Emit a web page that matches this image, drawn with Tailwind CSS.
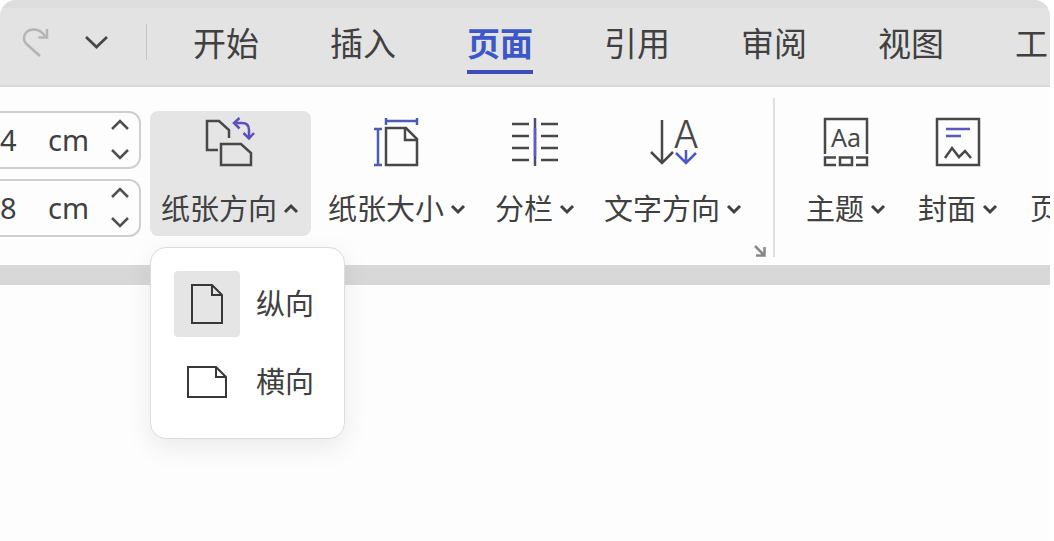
<!DOCTYPE html>
<html lang="zh-CN">

<head>
    <meta charset="UTF-8" />
    <meta name="viewport" content="width=device-width, initial-scale=1.0" />
    <script src="https://cdn.jsdelivr.net/npm/@tailwindcss/browser@4"></script>
    <title>页面</title>
</head>

<body class="bg-white min-h-screen overflow-x-hidden pr-1 font-['Noto_Sans','Noto_Sans_CJK_SC',sans-serif] text-[#404040]">
    <div class="min-h-screen overflow-hidden rounded-t-2xl bg-[#fdfdfd]">

        <!-- Tabs -->
        <header class="flex h-[87px] items-center overflow-hidden border-t-8 border-b-2 border-t-[#dedede] border-b-[#d8d8d8] bg-[#e3e3e3] pb-[6px] whitespace-nowrap">
            <button type="button" aria-label="恢复" class="mb-1 ml-5 shrink-0">
                <svg class="size-8" viewBox="0 0 32 32" fill="none" stroke="#b4b4b4" stroke-width="2.5">
                    <path d="M20 30L6.500 18C1.500 13 4.500 4 13 3.500C19 3.200 23 6.500 25.500 11" />
                    <path d="M27 3V11.500H18.500" />
                </svg>
            </button>
            <button type="button" aria-label="更多" class="mb-1 ml-8 shrink-0">
                <svg class="w-6 h-4" viewBox="0 0 24 16" fill="none" stroke="#484848" stroke-width="2.8">
                    <path d="M2 3L12.500 13L23 3" />
                </svg>
            </button>
            <span class="mb-1 ml-[38px] h-9 w-px shrink-0 bg-[#c4c4c4]"></span>

            <nav class="ml-[46px] flex gap-[71px] text-[33px] leading-[52px]">
                <a href="#" class="border-y-4 border-transparent">开始</a>
                <a href="#" class="border-y-4 border-transparent">插入</a>
                <a href="#" class="border-y-4 border-t-transparent border-b-[#3c4cb8] font-bold text-[#3c58c8]">页面</a>
                <a href="#" class="border-y-4 border-transparent">引用</a>
                <a href="#" class="border-y-4 border-transparent">审阅</a>
                <a href="#" class="border-y-4 border-transparent">视图</a>
                <a href="#" class="border-y-4 border-transparent">工</a>
            </nav>
        </header>

        <!-- Ribbon -->
        <section class="flex items-start border-b-20 border-[#d8d8d8] pt-6 pb-7 text-[29px] whitespace-nowrap">
            <div class="flex w-[141px] shrink-0 flex-col gap-[10px]">
                <div class="flex h-[58px] items-center rounded-r-xl border-2 border-l-0 border-[#cfcfcf] leading-10">
                    <input type="text" value="4" aria-label="上边距" class="w-12 outline-none" />
                    <span class="w-[60px]">cm</span>
                    <span class="flex flex-col gap-2">
                        <button type="button" aria-label="增加上边距">
                            <svg class="block w-6 h-5" viewBox="0 0 24 20" fill="none" stroke="#505050" stroke-width="2.500">
                                <path d="M4 13L12 5L20 13" />
                            </svg>
                        </button>
                        <button type="button" aria-label="减少上边距">
                            <svg class="block w-6 h-5" viewBox="0 0 24 20" fill="none" stroke="#505050" stroke-width="2.500">
                                <path d="M4 6L12 14L20 6" />
                            </svg>
                        </button>
                    </span>
                </div>
                <div class="flex h-[58px] items-center rounded-r-xl border-2 border-l-0 border-[#cfcfcf] leading-10">
                    <input type="text" value="8" aria-label="下边距" class="w-12 outline-none" />
                    <span class="w-[60px]">cm</span>
                    <span class="flex flex-col gap-2">
                        <button type="button" aria-label="增加下边距">
                            <svg class="block w-6 h-5" viewBox="0 0 24 20" fill="none" stroke="#505050" stroke-width="2.500">
                                <path d="M4 13L12 5L20 13" />
                            </svg>
                        </button>
                        <button type="button" aria-label="减少下边距">
                            <svg class="block w-6 h-5" viewBox="0 0 24 20" fill="none" stroke="#505050" stroke-width="2.500">
                                <path d="M4 6L12 14L20 6" />
                            </svg>
                        </button>
                    </span>
                </div>
            </div>

            <div class="ml-[9px] flex shrink-0 gap-[6px]">
                <div class="relative">
                    <button type="button" class="flex flex-col items-center gap-[22px] rounded-lg bg-[#e5e5e5] pt-[6px] pr-3 pb-[7px] pl-[11px]">
                        <svg class="size-[50px]" viewBox="0 0 50 50" fill="none" stroke="#484848" stroke-width="2.500">
                            <path d="M13 33H2V4H14L24 13V21" />
                            <path d="M16 27H36L46 36V48H16Z" />
                            <g stroke="#5b50c0">
                                <path d="M29 6H37Q44 6 44 13V20" />
                                <path d="M34.500 1L29 6L34.500 11.500M38.500 16L44 21.500L49 16" />
                            </g>
                        </svg>
                        <span class="flex items-center gap-[6px] leading-10">纸张方向
                            <svg class="size-4" viewBox="0 0 16 16" fill="none" stroke="#404040" stroke-width="3">
                                <path d="M2 11L8 5L14 11" />
                            </svg>
                        </span>
                    </button>

                    <!-- Orientation menu -->
                    <div class="absolute top-full left-0 z-10 mt-[11px] flex w-[195px] flex-col gap-3 rounded-2xl border border-[#dcdcdc] bg-white px-[23px] py-[23px] shadow-[0_8px_28px_rgba(0,0,0,0.08)]">
                        <button type="button" class="flex items-center gap-4">
                            <span class="flex size-[66px] shrink-0 items-center justify-center rounded-sm bg-[#e5e5e5]">
                                <svg class="size-10" viewBox="0 0 40 40" fill="none" stroke="#383838" stroke-width="2">
                                    <path d="M5 1H25L35 11V39H5Z" />
                                    <path d="M25 1V11H35" />
                                </svg>
                            </span>
                            纵向
                        </button>
                        <button type="button" class="flex items-center gap-4">
                            <span class="flex size-[66px] shrink-0 items-center justify-center">
                                <svg class="size-10" viewBox="0 0 40 40" fill="none" stroke="#383838" stroke-width="2">
                                    <path d="M1 5H29L39 15V35H1Z" />
                                    <path d="M29 5V15H39" />
                                </svg>
                            </span>
                            横向
                        </button>
                    </div>
                </div>

                <button type="button" class="flex flex-col items-center gap-[22px] rounded-lg pt-[6px] pr-3 pb-[7px] pl-[11px]">
                    <svg class="size-[50px]" viewBox="0 0 50 50" fill="none" stroke="#484848" stroke-width="2.500">
                        <path d="M14 11H34L45 22V48H14Z" />
                        <path d="M33 11V23H45" />
                        <path stroke="#4a5cb4" d="M14 4H45M14 1V8M45 1V8M6 12V48M2 12H10M2 48H10" />
                    </svg>
                    <span class="flex items-center gap-[6px] leading-10">纸张大小
                        <svg class="size-4" viewBox="0 0 16 16" fill="none" stroke="#404040" stroke-width="3">
                            <path d="M2 5L8 11L14 5" />
                        </svg>
                    </span>
                </button>

                <button type="button" class="flex flex-col items-center gap-[22px] rounded-lg pt-[6px] pr-3 pb-[7px] pl-[11px]">
                    <svg class="size-[50px]" viewBox="0 0 50 50" fill="none" stroke="#484848" stroke-width="2.500">
                        <path d="M2 7H19M2 19H19M2 31H19M2 43H19M31 7H48M31 19H48M31 31H48M31 43H48" />
                        <path stroke="#4c4c78" d="M25 1V49" />
                        <path stroke="#5a5fc8" d="M25 11V39" />
                    </svg>
                    <span class="flex items-center gap-[6px] leading-10">分栏
                        <svg class="size-4" viewBox="0 0 16 16" fill="none" stroke="#404040" stroke-width="3">
                            <path d="M2 5L8 11L14 5" />
                        </svg>
                    </span>
                </button>

                <button type="button" class="flex flex-col items-center gap-[22px] rounded-lg pt-[6px] pr-3 pb-[7px] pl-[11px]">
                    <svg class="h-[50px] w-14" viewBox="0 0 56 50" fill="none" stroke="#484848" stroke-width="2.500">
                        <path d="M17 3V46M6 35L17 46L28 35" />
                        <text x="41" y="31" text-anchor="middle" fill="#484848" stroke="none" class="font-['Inter',sans-serif] text-[38px] font-light">A</text>
                        <path stroke="#4a5ac4" d="M41 33V46M31 36L41 46L51 36" />
                    </svg>
                    <span class="flex items-center gap-[6px] leading-10">文字方向
                        <svg class="size-4" viewBox="0 0 16 16" fill="none" stroke="#404040" stroke-width="3">
                            <path d="M2 5L8 11L14 5" />
                        </svg>
                    </span>
                </button>
            </div>

            <div class="-mt-[13px] -mb-5 flex w-[21px] shrink-0 items-end self-stretch border-r-2 border-[#dedede]">
                <button type="button" aria-label="页面设置">
                    <svg class="size-3" viewBox="0 0 12 12" fill="none" stroke="#888888" stroke-width="2.500">
                        <path d="M1 1L10 10M10.500 2V10.500H2" />
                    </svg>
                </button>
            </div>

            <div class="ml-5 flex gap-[9px]">
                <button type="button" class="flex flex-col items-center gap-[22px] rounded-lg pt-[6px] pr-3 pb-[7px] pl-[11px]">
                    <svg class="size-[50px]" viewBox="0 0 50 50" fill="none" stroke="#484848" stroke-width="2.500">
                        <path d="M4 37V2H46V37" />
                        <text x="25" y="30" text-anchor="middle" fill="#484848" stroke="none" class="font-['Noto_Sans',sans-serif] text-[25px]">Aa</text>
                        <path d="M15 40.500H4V48H15M19 40.500H31V48H19ZM35 40.500H46V48H35" />
                    </svg>
                    <span class="flex items-center gap-[6px] leading-10">主题
                        <svg class="size-4" viewBox="0 0 16 16" fill="none" stroke="#404040" stroke-width="3">
                            <path d="M2 5L8 11L14 5" />
                        </svg>
                    </span>
                </button>

                <button type="button" class="flex flex-col items-center gap-[22px] rounded-lg pt-[6px] pr-3 pb-[7px] pl-[11px]">
                    <svg class="size-[50px]" viewBox="0 0 50 50" fill="none" stroke="#484848" stroke-width="2.500">
                        <path d="M4 2H46V48H4Z" />
                        <path stroke="#5a58c0" d="M13 12H37M13 19H28" />
                        <path d="M12 41L19 31L26 40L32 34L38 41" />
                    </svg>
                    <span class="flex items-center gap-[6px] leading-10">封面
                        <svg class="size-4" viewBox="0 0 16 16" fill="none" stroke="#404040" stroke-width="3">
                            <path d="M2 5L8 11L14 5" />
                        </svg>
                    </span>
                </button>

                <button type="button" class="pt-[78px] pr-3 pb-[7px] pl-[11px] leading-10">页</button>
            </div>
        </section>

        <!-- Document area -->
        <main></main>
    </div>
</body>

</html>
